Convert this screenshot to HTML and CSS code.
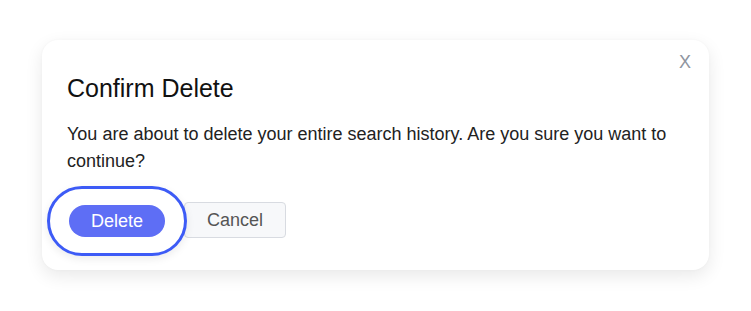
FILE: index.html
```html
<!DOCTYPE html>
<html lang="en">
<head>
<meta charset="utf-8">
<title>Confirm Delete</title>
<link rel="stylesheet" href="styles.css">
</head>
<body>
<div class="page">
  <div class="dialog" role="dialog" aria-labelledby="dlg-title">
    <button class="close" aria-label="Close">X</button>
    <h2 class="title" id="dlg-title">Confirm Delete</h2>
    <p class="message">You are about to delete your entire search history. Are you sure you want to continue?</p>
    <div class="actions">
      <button class="btn btn-primary">Delete</button>
      <button class="btn btn-secondary">Cancel</button>
    </div>
  </div>
</div>
</body>
</html>
```
FILE: styles.css
```css
html, body {
  margin: 0;
  padding: 0;
  background: #ffffff;
}
body {
  font-family: "Liberation Sans", Arial, sans-serif;
  width: 751px;
  height: 311px;
  overflow: hidden;
}
.page {
  padding: 40px 0 0 42px;
}
.dialog {
  position: relative;
  box-sizing: border-box;
  width: 667px;
  height: 230px;
  background: #ffffff;
  border-radius: 16px;
  box-shadow: 0 6px 18px rgba(0, 0, 0, 0.09), 0 0 3px rgba(0, 0, 0, 0.03);
  padding: 34px 25px 32px 25px;
}
.close {
  position: absolute;
  top: 12px;
  right: 18px;
  border: none;
  background: none;
  padding: 0;
  font-family: "Liberation Sans", Arial, sans-serif;
  font-size: 18px;
  line-height: 20px;
  color: #8f959f;
  cursor: pointer;
}
.title {
  margin: 0;
  font-size: 25px;
  line-height: 29px;
  font-weight: 400;
  color: #111111;
}
.message {
  margin: 18px 0 0 0;
  font-size: 18px;
  line-height: 27px;
  color: #222222;
}
.actions {
  display: flex;
  align-items: center;
  gap: 19px;
  margin-top: 27px;
  padding-left: 2px;
}
.btn {
  font-family: "Liberation Sans", Arial, sans-serif;
  font-size: 18px;
  line-height: 20px;
  cursor: pointer;
}
.btn-primary {
  position: relative;
  border: none;
  background: #5e6ef5;
  color: #ffffff;
  border-radius: 999px;
  padding: 6px 22px;
  margin-top: 1px;
}
.btn-primary::after {
  content: "";
  position: absolute;
  top: -19px;
  bottom: -19px;
  left: -22px;
  right: -22px;
  border: 3px solid #3d5bf6;
  border-radius: 999px;
  box-shadow: 0 3px 8px rgba(0, 0, 0, 0.08);
}
.btn-secondary {
  border: 1px solid #d8dbe1;
  background: #f7f8fa;
  color: #555555;
  border-radius: 4px;
  padding: 7px 22px;
}
```
